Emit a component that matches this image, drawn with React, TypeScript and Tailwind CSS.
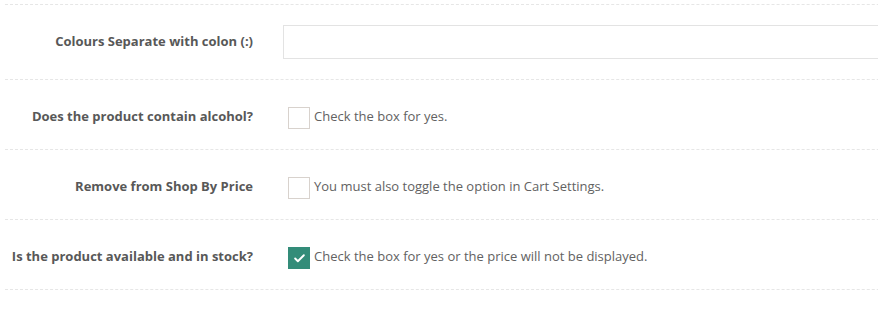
import { Check } from "lucide-react";

const rows = [
    { label: "Does the product contain alcohol?", note: "Check the box for yes.", checked: false },
    { label: "Remove from Shop By Price", note: "You must also toggle the option in Cart Settings.", checked: false },
    { label: "Is the product available and in stock?", note: "Check the box for yes or the price will not be displayed.", checked: true },
];

function Box({ checked }: { checked: boolean }) {
    if (checked) {
        return (
            <span className="w-[22px] h-[22px] bg-[#338c79] flex items-center justify-center shrink-0">
                <Check className="w-[13px] h-[13px] text-white" strokeWidth={3.5} />
            </span>
        );
    }
    return <span className="w-[22px] h-[22px] border border-[#d8d2cd] bg-white shrink-0" />;
}

export default function App() {
    return (
        <div className="w-[878px] h-[324px] bg-white overflow-hidden font-['Open_Sans',sans-serif]">
            <div className="w-[1000px] pl-[5px] pt-[4px]">
                <div className="border-t border-dashed border-[#e6e6e6] flex items-center pt-[20px] pb-[20px]">
                    <label className="w-[248px] text-right text-[13px] font-bold text-[#585858]">
                        Colours Separate with colon (:)
                    </label>
                    <input type="text" className="ml-[30px] w-[640px] h-[34px] border border-[#e3e3e3] bg-white outline-none" />
                </div>

                {rows.map((row) => (
                    <div key={row.label} className="border-t border-dashed border-[#e6e6e6] flex items-start pt-[27px] pb-[20px]">
                        <label className="w-[248px] text-right text-[13px] font-bold text-[#585858] leading-[19px]">
                            {row.label}
                        </label>
                        <div className="ml-[35px] flex items-start gap-[4px]">
                            <Box checked={row.checked} />
                            <span className="text-[13px] text-[#626262] leading-[19px]">{row.note}</span>
                        </div>
                    </div>
                ))}
                <div className="border-t border-dashed border-[#e6e6e6]" />
            </div>
        </div>
    );
}
